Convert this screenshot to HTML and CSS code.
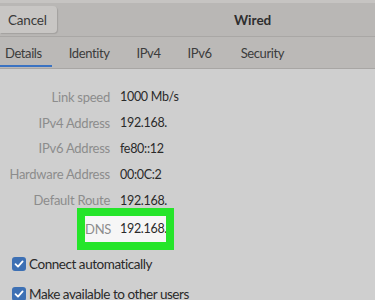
FILE: index.html
```html
<!DOCTYPE html>
<html lang="en">
<head>
    <meta charset="UTF-8">
    <meta name="viewport" content="width=device-width, initial-scale=1.0">
    <title>Wired</title>
    <link rel="stylesheet" href="styles.css">
</head>
<body>
    <div class="window">
        <header class="titlebar">
            <button class="cancel">Cancel</button>
            <h1>Wired</h1>
        </header>

        <nav class="tabs">
            <a class="tab active" href="#">Details</a>
            <a class="tab" href="#">Identity</a>
            <a class="tab" href="#">IPv4</a>
            <a class="tab" href="#">IPv6</a>
            <a class="tab" href="#">Security</a>
        </nav>

        <main class="details">
            <div class="row"><span class="label">Link speed</span><span class="value">1000 Mb/s</span></div>
            <div class="row"><span class="label">IPv4 Address</span><span class="value">192.168.</span></div>
            <div class="row"><span class="label">IPv6 Address</span><span class="value">fe80::12</span></div>
            <div class="row"><span class="label">Hardware Address</span><span class="value">00:0C:2</span></div>
            <div class="row"><span class="label">Default Route</span><span class="value">192.168.</span></div>
            <div class="row dns">
                <div class="highlight">
                    <span class="label">DNS</span><span class="value">192.168.</span>
                </div>
            </div>

            <div class="checks">
                <label class="check"><span class="box"><svg viewBox="0 0 14 14" width="14" height="14"><path d="M3.5 7.2 L6 9.6 L10.6 4.4" fill="none" stroke="#fff" stroke-width="1.8" stroke-linecap="round" stroke-linejoin="round"/></svg></span>Connect automatically</label>
                <label class="check"><span class="box"><svg viewBox="0 0 14 14" width="14" height="14"><path d="M3.5 7.2 L6 9.6 L10.6 4.4" fill="none" stroke="#fff" stroke-width="1.8" stroke-linecap="round" stroke-linejoin="round"/></svg></span>Make available to other users</label>
            </div>
        </main>
    </div>
</body>
</html>
```

FILE: styles.css
```css
/* GNOME style dialog */
body {
    margin: 0;
    padding: 0;
    font-family: Lato, "Noto Sans", sans-serif;
    background-color: #cfcfcf;
    color: #2e2e2e;
}

.window {
    width: 375px;
    height: 300px;
    overflow: hidden;
    background-color: #cfcfcf;
}

.titlebar {
    height: 33px;
    border-top: 3px solid #c6c4c2;
    border-bottom: 1px solid #a9a7a5;
    background-color: #b9b7b5;
    display: flex;
    align-items: center;
}

.cancel {
    height: 27px;
    width: 57px;
    padding: 0 0 0 8px;
    text-align: left;
    border: none;
    border-radius: 0 4px 4px 0;
    background-color: #c8c6c4;
    box-shadow: 1px 1px 1px rgba(0, 0, 0, 0.12);
    font-family: inherit;
    font-size: 13.5px;
    letter-spacing: -0.2px;
    color: #3a3a3a;
}

.titlebar h1 {
    margin: 0 0 0 177px;
    font-size: 13.5px;
    font-weight: bold;
    color: #2e2e2e;
}

.tabs {
    height: 31px;
    display: flex;
    align-items: stretch;
    background-color: #bbb9b7;
    border-bottom: 1px solid #a8a6a4;
}

.tab {
    position: relative;
    display: flex;
    align-items: center;
    padding-top: 1px;
    font-size: 13px;
    letter-spacing: -0.4px;
    color: #3c3c3c;
    text-decoration: none;
    margin-right: 27px;
}

.tab:first-child {
    margin-left: 5px;
}

.tab:nth-child(4) {
    margin-right: 29px;
}

.tab.active::after {
    content: "";
    position: absolute;
    left: -5px;
    right: -10px;
    bottom: 1px;
    height: 2px;
    background-color: #3b73c2;
}

.details {
    padding-top: 15px;
}

.row {
    display: flex;
    align-items: center;
    height: 25.8px;
    font-size: 13px;
}

.label {
    width: 110px;
    text-align: right;
    letter-spacing: -0.25px;
    color: #8c8c8c;
    flex-shrink: 0;
}

.value {
    margin-left: 10px;
    font-size: 12.5px;
    letter-spacing: -0.3px;
    color: #2a2a2a;
}

.row.dns {
    margin-top: 3px;
    height: 26px;
}

.highlight {
    display: flex;
    align-items: center;
    height: 26px;
    width: 81px;
    margin-left: 85px;
    background-color: #f6f6f6;
    outline: 8px solid #25e52a;
}

.highlight .label {
    width: 25px;
    text-align: left;
}

.checks {
    margin-top: 7px;
    padding-left: 12px;
}

.check {
    display: flex;
    align-items: center;
    height: 30px;
    font-size: 13.5px;
    letter-spacing: -0.45px;
    color: #2a2a2a;
}

.box {
    width: 14px;
    height: 14px;
    margin-right: 3px;
    border-radius: 3px;
    background-color: #3d70b4;
    display: flex;
}
```
